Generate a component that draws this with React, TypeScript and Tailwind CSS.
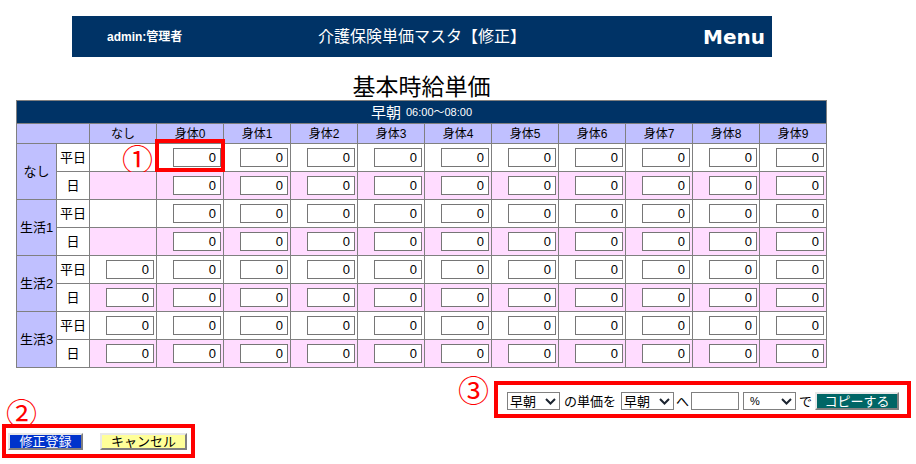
import React from "react";

const cols = ["なし", "身体0", "身体1", "身体2", "身体3", "身体4", "身体5", "身体6", "身体7", "身体8", "身体9"];
const groups = ["なし", "生活1", "生活2", "生活3"];
const kinds = ["平日", "日"];

function Num() {
  return (
    <input
      readOnly
      defaultValue="0"
      className="h-[19px] w-[48px] border border-[#767676] bg-white pr-[4px] text-right text-[13px] leading-[17px] text-black outline-none"
    />
  );
}

function Chevron() {
  return (
    <svg width="11" height="7" viewBox="0 0 11 7">
      <polyline points="1,1 5.5,5.5 10,1" fill="none" stroke="#1b2430" strokeWidth="2" />
    </svg>
  );
}

function Bevel({ children, className }: { children: React.ReactNode; className: string }) {
  return (
    <div
      className={
        "flex items-center justify-center border-[2px] border-t-[#e8e8e8] border-l-[#e8e8e8] border-r-[#808080] border-b-[#808080] text-[13px] leading-none " +
        className
      }
    >
      {children}
    </div>
  );
}

export default function App() {
  return (
    <div className="min-h-[464px] w-[916px] bg-white pt-[16px] font-[family-name:'Liberation_Sans','Noto_Sans_CJK_JP',sans-serif] text-black">
      {/* Header bar */}
      <div className="ml-[72px] grid h-[41px] w-[700px] grid-cols-[1fr_auto_1fr] items-center bg-[#003366] text-white">
        <div className="pl-[35px] text-[12px] font-bold">admin:管理者</div>
        <div className="text-[16px] leading-none">介護保険単価マスタ【修正】</div>
        <div className="flex justify-end pr-[7px]">
          <span className="font-[family-name:'DejaVu_Sans',sans-serif] text-[20px] font-bold leading-none">Menu</span>
        </div>
      </div>

      {/* Title */}
      <div className="ml-[16px] h-[43px] w-[811px] pt-[19px] text-center text-[23px] leading-[23px]">基本時給単価</div>

      {/* Table */}
      <div className="ml-[16px] grid w-[811px] grid-cols-[39px_32px_66px_repeat(10,66px)] grid-rows-[22px_19px_repeat(8,27px)] gap-px bg-[#808080] p-px">
        <div className="col-[1/-1] flex items-center justify-center gap-[5px] bg-[#003366] text-white">
          <span className="text-[15px] leading-none">早朝</span>
          <span className="text-[11px] leading-none">06:00～08:00</span>
        </div>
        <div className="col-span-2 bg-[#c0c0ff]" />
        {cols.map((c) => (
          <div key={c} className="flex items-center justify-center bg-[#c0c0ff] text-[12px] leading-none">
            {c}
          </div>
        ))}
        {groups.map((g, gi) =>
          kinds.map((k, ki) => {
            const bg = ki === 0 ? "bg-white" : "bg-[#ffdcff]";
            return (
              <React.Fragment key={g + k}>
                {ki === 0 && (
                  <div className="row-span-2 flex items-center justify-center bg-[#c0c0ff] text-[13px] leading-none">{g}</div>
                )}
                <div className="flex items-center justify-center bg-white text-[13px] leading-none">{k}</div>
                <div className={"flex items-center justify-end pr-[2px] " + bg}>
                  {gi >= 2 ? (
                    <Num />
                  ) : gi === 0 && ki === 0 ? (
                    <span className="mr-[1px] font-[family-name:'Noto_Sans_CJK_JP',sans-serif] text-[31px] leading-[27px] text-[#ff0000]">①</span>
                  ) : null}
                </div>
                {cols.slice(1).map((c, ci) => {
                  const marked = gi === 0 && ki === 0 && ci === 0;
                  return (
                    <div key={c} className={(marked ? "relative " : "") + "flex items-center justify-end pr-[2px] " + bg}>
                      <Num />
                      {marked && (
                        <div className="pointer-events-none absolute -top-[5px] -right-[2px] -bottom-[1px] -left-[2px] z-10 border-[4px] border-[#ff0000]" />
                      )}
                    </div>
                  );
                })}
              </React.Fragment>
            );
          })
        )}
      </div>

      {/* Copy controls */}
      <div className="mt-[8px] flex items-start justify-end pr-[5px]">
        <span className="mr-[5px] font-[family-name:'Noto_Sans_CJK_JP',sans-serif] text-[31px] leading-[25px] text-[#ff0000]">③</span>
        <div className="mt-[5px] flex h-[37px] w-[417px] items-center border-[4px] border-[#ff0000] bg-white pt-[3px] text-[13px] leading-none">
          <div className="ml-[9px] flex h-[18px] w-[53px] items-center justify-between border border-[#808080] bg-white pr-[3px] pl-[2px]">
            <span>早朝</span>
            <Chevron />
          </div>
          <span className="ml-[4px]">の単価を</span>
          <div className="ml-[5px] flex h-[18px] w-[53px] items-center justify-between border border-[#808080] bg-white pr-[3px] pl-[2px]">
            <span>早朝</span>
            <Chevron />
          </div>
          <span className="ml-[2px]">へ</span>
          <input readOnly className="ml-[2px] h-[18px] w-[48px] border border-[#808080] bg-white outline-none" />
          <div className="ml-[4px] flex h-[18px] w-[53px] items-center justify-between border border-[#808080] bg-white pr-[3px] pl-[6px]">
            <span className="text-[11px]">%</span>
            <Chevron />
          </div>
          <span className="ml-[3px]">で</span>
          <Bevel className="ml-[3px] h-[18px] w-[84px] bg-[#006666] text-white">コピーする</Bevel>
        </div>
      </div>

      {/* Bottom buttons */}
      <div className="-mt-[19px]">
        <div className="h-[25px] pl-[6px] font-[family-name:'Noto_Sans_CJK_JP',sans-serif] text-[31px] leading-[25px] text-[#ff0000]">②</div>
        <div className="ml-[2px] flex h-[34px] w-[193px] items-center border-[4px] border-[#ff0000] bg-white">
          <Bevel className="ml-[2px] h-[17px] w-[75px] bg-[#0033cc] text-white">修正登録</Bevel>
          <Bevel className="ml-[17px] h-[17px] w-[87px] bg-[#ffff99] text-black">キャンセル</Bevel>
        </div>
      </div>
    </div>
  );
}
